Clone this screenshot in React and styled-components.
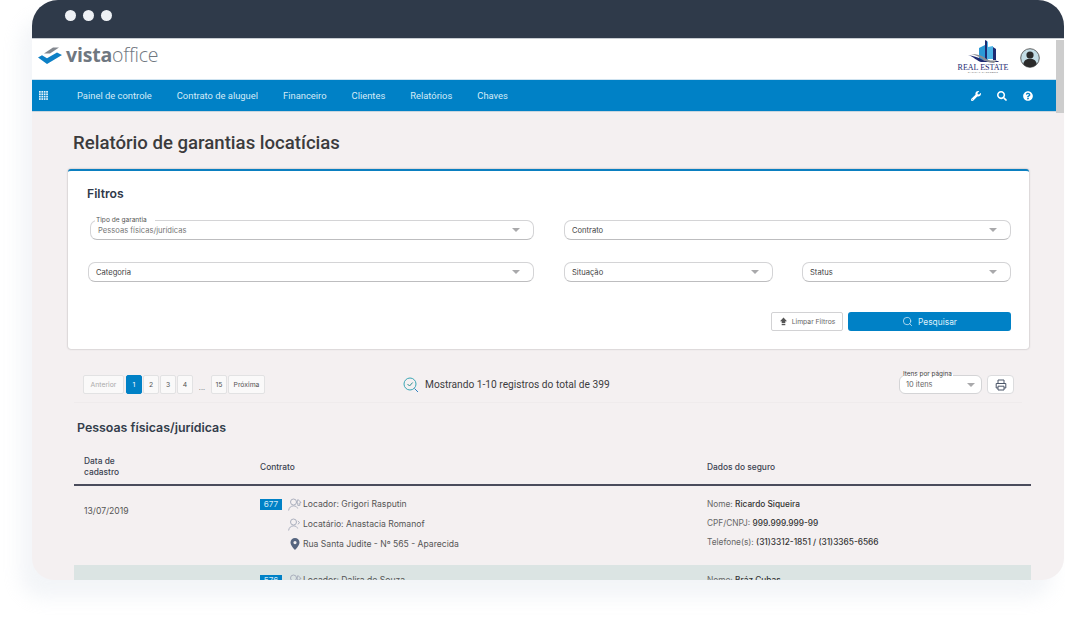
import React from "react";
import styled, { createGlobalStyle } from "styled-components";
import { FaWrench, FaSearch, FaQuestionCircle } from "react-icons/fa";
import { Search } from "lucide-react";

const Global = createGlobalStyle`
  html, body { margin: 0; padding: 0; background: #fff; font-family: Roboto, "Liberation Sans", sans-serif; }
  * { box-sizing: border-box; }
`;

const Stage = styled.div`
  width: 1065px; height: 618px; overflow: hidden; padding-left: 32px;
`;
const Win = styled.div`
  width: 1032px; height: 580px; border-radius: 26px 26px 22px 22px; overflow: hidden;
  display: flex; flex-direction: column; position: relative;
  background: #f4f0f1;
  box-shadow: -12px 18px 18px rgba(215, 222, 232, 0.3);
`;
const TitleBar = styled.div`
  height: 39px; flex: none; background: #2f3a4a; display: flex; align-items: flex-start; gap: 7px;
  padding: 10px 0 0 33px; border-bottom: 1px solid #c7ccd2;
`;
const Dot = styled.span`
  width: 11px; height: 11px; border-radius: 50%; background: #eef1f5;
`;
const Scroll = styled.div`
  position: absolute; right: 0; top: 40px; width: 8px; height: 73px; background: #cdcdcd;
`;
const Header = styled.header`
  height: 41px; flex: none; background: #fff; display: flex; align-items: flex-start; justify-content: space-between;
  padding: 0 24px 0 6px; border-bottom: 1px solid #cfe3f0;
`;
const LogoWrap = styled.div`
  display: flex; align-items: center; gap: 4px; height: 30px; margin-top: 1px;
`;
const LogoText = styled.div`
  font-family: "Open Sans", sans-serif; font-size: 19.5px; line-height: 24px; color: #6f7780; font-weight: 300; letter-spacing: -0.2px;
  b { font-weight: 700; }
`;
const Right = styled.div`
  display: flex; align-items: flex-start; gap: 16px;
`;
const Estate = styled.div`
  width: 42px; display: flex; flex-direction: column; align-items: center; font-family: "Liberation Serif", serif;
  color: #1d2a72; font-size: 8px; line-height: 7px; white-space: nowrap; padding-top: 0;
  small { font-size: 2.5px; line-height: 3px; color: #555; letter-spacing: .4px; font-family: "Liberation Sans", sans-serif; }
`;
const Nav = styled.nav`
  height: 32px; flex: none; background: #0081c6; display: flex; align-items: center; padding: 0 31px 0 7px;
  border-bottom: 1px solid #c9d6df; color: #fff;
`;
const NavLinks = styled.div`
  display: flex; gap: 25px; margin-left: 29px; flex: 1;
`;
const NavLink = styled.a`
  font-size: 9.4px; color: #d5ebf7; white-space: nowrap;
`;
const NavIcons = styled.div`
  display: flex; gap: 16px; align-items: center;
  svg { display: block; }
`;
const Main = styled.main`
  flex: 1; padding: 20px 35px 0 36px; overflow: hidden;
`;
const Title = styled.h1`
  margin: 0 0 14px 5px; font-size: 18.6px; line-height: 23px; font-weight: 500; color: #3b3b3d;
`;
const Card = styled.section`
  height: 180px; background: #fff; border-top: 2px solid #0b7fc0; border-radius: 3px; padding: 15px 18px 0 19px;
  box-shadow: 0 0 2px rgba(0,0,0,.35);
`;
const CardTitle = styled.h2`
  margin: 0 0 18px; font-size: 12.2px; line-height: 16px; font-weight: 600; color: #2f3a4a; font-family: Inter, sans-serif;
`;
const FilterRow = styled.div`
  display: flex; justify-content: space-between; margin-bottom: 22px; height: 20px;
`;
const FilterGroup = styled.div`
  display: flex; justify-content: space-between; width: 447px;
`;
const Select = styled.div`
  position: relative; height: 20px; width: ${p => p.$w}px; margin-left: ${p => p.$ml || 0}px;
  border: 1px solid #d4d4d6; border-bottom-color: #bdbdbf; border-radius: 7px; background: #fff;
  display: flex; align-items: center; justify-content: space-between; padding: 0 13px 0 7px;
  font-size: 7.6px; color: ${p => p.$muted ? "#777" : "#444"}; white-space: nowrap;
  font-family: Inter, sans-serif;
`;
const Caret = styled.i`
  width: 0; height: 0; border-left: 4.5px solid transparent; border-right: 4.5px solid transparent; border-top: 4px solid #a9a9ab; flex: none;
`;
const Legend = styled.span`
  position: absolute; left: 4px; top: -5px; background: #fff; padding: 0 8px 0 1px; font-size: 6.6px; line-height: 8px; color: #555;
  font-family: Inter, sans-serif;
`;
const Actions = styled.div`
  display: flex; justify-content: flex-end; gap: 5px; margin-top: 30px;
`;
const Ghost = styled.button`
  width: 72px; height: 19px; border: 1px solid #d2d2d4; border-radius: 2px; background: #fff; color: #666; font-size: 6.8px;
  display: flex; align-items: center; justify-content: center; gap: 4px; padding: 0; font-family: Inter, sans-serif;
`;
const Primary = styled.button`
  width: 163px; height: 19px; border: none; border-radius: 3px; background: #0081c6; color: #dff0fa; font-size: 8.4px;
  display: flex; align-items: center; justify-content: center; gap: 5px; padding: 0; font-family: Inter, sans-serif;
`;
const Toolbar = styled.div`
  margin: 26px 7px 0 6px; height: 28px; border-bottom: 1px solid #efebec; display: flex; align-items: flex-start; justify-content: space-between; padding: 0 8px 0 9px;
`;
const Pager = styled.div`
  display: flex; gap: 1px; align-items: flex-start; width: 320px;
`;
const Page = styled.span`
  height: 19px; width: ${p => p.$w}px; border-radius: 2px; display: flex; align-items: center; justify-content: center;
  font-size: 6.8px; font-family: Inter, sans-serif;
  border: 1px solid ${p => p.$active ? "#0081c6" : "#e2e2e3"};
  background: ${p => p.$active ? "#0081c6" : "#faf9f9"};
  color: ${p => p.$active ? "#fff" : p.$off ? "#aaa" : "#555"};
  margin-right: ${p => p.$mr || 0}px;
`;
const Gap = styled.span`
  width: 16px; text-align: center; font-size: 8px; color: #666; padding-top: 6px; line-height: 13px;
`;
const Showing = styled.div`
  display: flex; align-items: center; gap: 6px; height: 19px; font-size: 10.2px; color: #3c3c3e; margin-left: 0; flex: 1; white-space: nowrap;
`;
const PerPage = styled.div`
  display: flex; gap: 5px; align-items: flex-start;
`;
const PerSelect = styled.div`
  position: relative; width: 83px; height: 19px; border: 1px solid #d4d4d6; border-radius: 6px; background: #fff;
  display: flex; align-items: center; justify-content: space-between; padding: 0 6px; font-size: 7.4px; color: #666; font-family: Inter, sans-serif;
`;
const PerLabel = styled.span`
  position: absolute; left: 3px; top: -6px; font-size: 6.4px; line-height: 8px; color: #444; background: linear-gradient(#f4f0f1 50%, #fff 50%); padding-right: 1px; font-family: Inter, sans-serif;
`;
const PrintBtn = styled.button`
  width: 27px; height: 19px; border: 1px solid #dcdcde; border-radius: 4px; background: #fff; padding: 0; display: flex; align-items: center; justify-content: center;
`;
const SectionTitle = styled.h3`
  margin: 16px 0 0 9px; font-size: 12.4px; line-height: 18px; font-weight: 600; color: #333d4b; font-family: Inter, sans-serif;
`;
const Table = styled.div`
  margin: 0 -2px 0 6px;
`;
const Cols = styled.div`
  display: grid; grid-template-columns: 176px 447px 1fr; padding-left: 10px;
`;
const Head = styled(Cols)`
  height: 36px; margin-top: 13px; border-bottom: 2px solid #4a4c5c; align-items: center; font-size: 8.4px; line-height: 10.6px; font-weight: 500; color: #3a4250;
  font-family: Inter, sans-serif;
`;
const Row = styled(Cols)`
  background: ${p => p.$tint ? "#dbe4e3" : "transparent"};
  height: ${p => p.$h}px; padding-top: ${p => p.$pt}px;
  font-family: Inter, sans-serif;
`;
const DateCell = styled.div`
  font-size: 8.6px; color: #555; padding-top: 7px; line-height: 12px;
`;
const ContractCell = styled.div`
  display: flex; flex-direction: column; gap: 8px;
`;
const ContractLine = styled.div`
  display: flex; align-items: center; height: 12px; font-size: 8.6px; color: #555; white-space: nowrap;
`;
const Badge = styled.span`
  width: 22px; height: 11px; margin-right: 4px; background: ${p => p.$hidden ? "transparent" : "#0081c6"}; color: #cfe8f7; font-size: 8.2px; line-height: 11px; text-align: center;
`;
const IconSlot = styled.span`
  width: 17px; height: 13px; display: flex; justify-content: center; align-items: center; margin-right: 0; flex: none;
`;
const LineText = styled.span`
  margin-left: 0;
`;
const InfoCell = styled.div`
  display: flex; flex-direction: column; gap: 7px;
`;
const InfoLine = styled.div`
  font-size: 8.3px; line-height: 12px; color: #666; white-space: nowrap;
  b { font-weight: 500; color: #333; }
`;

const PersonIcon = ({ extra }) => (
  <svg width="14" height="13" viewBox="0 0 14 13" fill="none" stroke="#a3a8b8" strokeWidth="0.9">
    <circle cx="5.5" cy="4" r="3" />
    <path d="M.6 12.5c.4-3 2.4-4.6 4.9-4.6s3.4 1 4.2 2.6" />
    {extra ? <path d="M10 1.5l3 3-1.2.3v2.6h-2V5l-1-.2z" /> : <path d="M9.8 3l1.8 1.7-1.8 1.6" />}
  </svg>
);

export default function App() {
  return (
    <Stage>
      <Global />
      <Win>
        <TitleBar><Dot /><Dot /><Dot /></TitleBar>
        <Scroll />
        <Header>
          <LogoWrap>
            <svg width="24" height="20" viewBox="0 0 24 20">
              <path d="M6 8.5 15 2.5h6l-9 6z" fill="#83888f" />
              <path d="M0 12.5l4-2.3 5 3 10-5.7 5 2.4-15 9z" fill="#0d80c6" />
            </svg>
            <LogoText><b>vista</b>office</LogoText>
          </LogoWrap>
          <Right>
            <Estate>
              <svg width="36" height="25" viewBox="0 0 36 25">
                <path d="M14 9l6-3v15h-6z" fill="#2b9ad6" />
                <path d="M20 1l2 1v19h-2z" fill="#1d2a72" />
                <path d="M22 2l1 1v18h-1zM23 8l5-1v13h-5z" fill="#4db4e6" />
                <path d="M28 8l3 2v11h-3z" fill="#1d2a72" />
                <path d="M3 16c5 1 10 2 13 4s8 2 17 2l1 1H16c-4-1-7-5-13-7z" fill="#1d2a72" />
                <path d="M6 15c6 0 10 1 14 4s8 3 12 2l-3 3c-6 0-10-3-13-5s-6-3-10-4z" fill="#8a8d93" />
              </svg>
              <span>REAL ESTATE</span>
              <small>CAPITAL PARTNERS</small>
            </Estate>
            <svg width="20" height="20" viewBox="0 0 20 20" style={{ marginTop: 9 }}>
              <circle cx="10" cy="10" r="9.3" fill="#c3dde6" stroke="#555" strokeWidth="0.9" />
              <circle cx="10" cy="7" r="3.6" fill="#2b2b2b" />
              <path d="M3.3 16c.5-3.6 3.2-5.3 6.7-5.3s6.200 1.700 6.700 5.300A9 9 0 0 1 10 19.300 9 9 0 0 1 3.300 16z" fill="#2b2b2b" />
            </svg>
          </Right>
        </Header>
        <Nav>
          <svg width="9" height="9" viewBox="0 0 9 9" fill="#e8f4fb">
            {[0, 2.4, 4.8, 7.2].flatMap(x => [0, 2.4, 4.8, 7.2].map(y => <rect key={`${x}-${y}`} x={x} y={y} width="1.7" height="1.7" />))}
          </svg>
          <NavLinks>
            <NavLink>Painel de controle</NavLink>
            <NavLink>Contrato de aluguel</NavLink>
            <NavLink>Financeiro</NavLink>
            <NavLink>Clientes</NavLink>
            <NavLink>Relatórios</NavLink>
            <NavLink>Chaves</NavLink>
          </NavLinks>
          <NavIcons>
            <FaWrench size={10} color="#fff" />
            <FaSearch size={10} color="#fff" />
            <FaQuestionCircle size={10} color="#fff" />
          </NavIcons>
        </Nav>
        <Main>
          <Title>Relatório de garantias locatícias</Title>
          <Card>
            <CardTitle>Filtros</CardTitle>
            <FilterRow>
              <Select $w={444} $ml={3} $muted>
                <Legend>Tipo de garantia</Legend>
                Pessoas físicas/jurídicas<Caret />
              </Select>
              <Select $w={447}>Contrato<Caret /></Select>
            </FilterRow>
            <FilterRow>
              <Select $w={446} $ml={1}>Categoria<Caret /></Select>
              <FilterGroup>
                <Select $w={209}>Situação<Caret /></Select>
                <Select $w={209}>Status<Caret /></Select>
              </FilterGroup>
            </FilterRow>
            <Actions>
              <Ghost>
                <svg width="9" height="9" viewBox="0 0 9 9" fill="#555"><path d="M4.500 .5 8 4.200H6.300V6H2.700V4.200H1z" /><path d="M2.700 6.800h3.600v1.400H2.700z" /></svg>
                Limpar Filtros
              </Ghost>
              <Primary><Search size={11} strokeWidth={1.6} />Pesquisar</Primary>
            </Actions>
          </Card>
          <Toolbar>
            <Pager>
              <Page $w={41} $off $mr={1}>Anterior</Page>
              <Page $w={16} $active>1</Page>
              <Page $w={16}>2</Page>
              <Page $w={16}>3</Page>
              <Page $w={16}>4</Page>
              <Gap>...</Gap>
              <Page $w={16}>15</Page>
              <Page $w={37}>Próxima</Page>
            </Pager>
            <Showing style={{}}>
              <svg width="16" height="16" viewBox="0 0 16 16" fill="none" stroke="#3aa6b5" strokeWidth="1">
                <circle cx="7" cy="7" r="6" />
                <path d="M4.500 7l2 2 3.200-3.500" stroke="#2f8f8f" />
                <path d="M11.500 11.500l3.500 3.500" stroke="#2f7fc0" />
              </svg>
              Mostrando 1-10 registros do total de 399
            </Showing>
            <PerPage>
              <PerSelect><PerLabel>Itens por página</PerLabel>10 itens<Caret /></PerSelect>
              <PrintBtn>
                <svg width="12" height="12" viewBox="0 0 12 12" fill="none" stroke="#4a5568" strokeWidth="1">
                  <path d="M3 4V1h6v3M3 9H1.200V4.500h9.600V9H9" />
                  <path d="M3 7.200h6v3.800H3z" />
                </svg>
              </PrintBtn>
            </PerPage>
          </Toolbar>
          <SectionTitle>Pessoas físicas/jurídicas</SectionTitle>
          <Table>
            <Head>
              <div>Data de<br />cadastro</div>
              <div>Contrato</div>
              <div>Dados do seguro</div>
            </Head>
            <Row $h={79} $pt={12}>
              <DateCell>13/07/2019</DateCell>
              <ContractCell>
                <ContractLine><Badge>677</Badge><IconSlot><PersonIcon extra /></IconSlot><LineText>Locador: Grigori Rasputin</LineText></ContractLine>
                <ContractLine><Badge $hidden /><IconSlot><PersonIcon /></IconSlot><LineText>Locatário: Anastacia Romanof</LineText></ContractLine>
                <ContractLine><Badge $hidden /><IconSlot>
                  <svg width="10" height="12" viewBox="0 0 10 12"><path fillRule="evenodd" d="M5 0a4.500 4.500 0 0 1 4.500 4.500C9.500 7.500 5 12 5 12S.5 7.500.5 4.500A4.500 4.500 0 0 1 5 0zm0 3a1.600 1.600 0 1 0 0 3.200A1.600 1.600 0 0 0 5 3z" fill="#56657f" /></svg>
                </IconSlot><LineText>Rua Santa Judite - Nº 565 - Aparecida</LineText></ContractLine>
              </ContractCell>
              <InfoCell>
                <InfoLine>Nome: <b>Ricardo Siqueira</b></InfoLine>
                <InfoLine>CPF/CNPJ: <b>999.999.999-99</b></InfoLine>
                <InfoLine>Telefone(s): <b>(31)3312-1851 / (31)3365-6566</b></InfoLine>
              </InfoCell>
            </Row>
            <Row $tint $h={40} $pt={9}>
              <DateCell />
              <ContractCell>
                <ContractLine><Badge>576</Badge><IconSlot><PersonIcon extra /></IconSlot><LineText>Locador: Dalira de Souza</LineText></ContractLine>
              </ContractCell>
              <InfoCell>
                <InfoLine>Nome: <b>Bráz Cubas</b></InfoLine>
              </InfoCell>
            </Row>
          </Table>
        </Main>
      </Win>
    </Stage>
  );
}
